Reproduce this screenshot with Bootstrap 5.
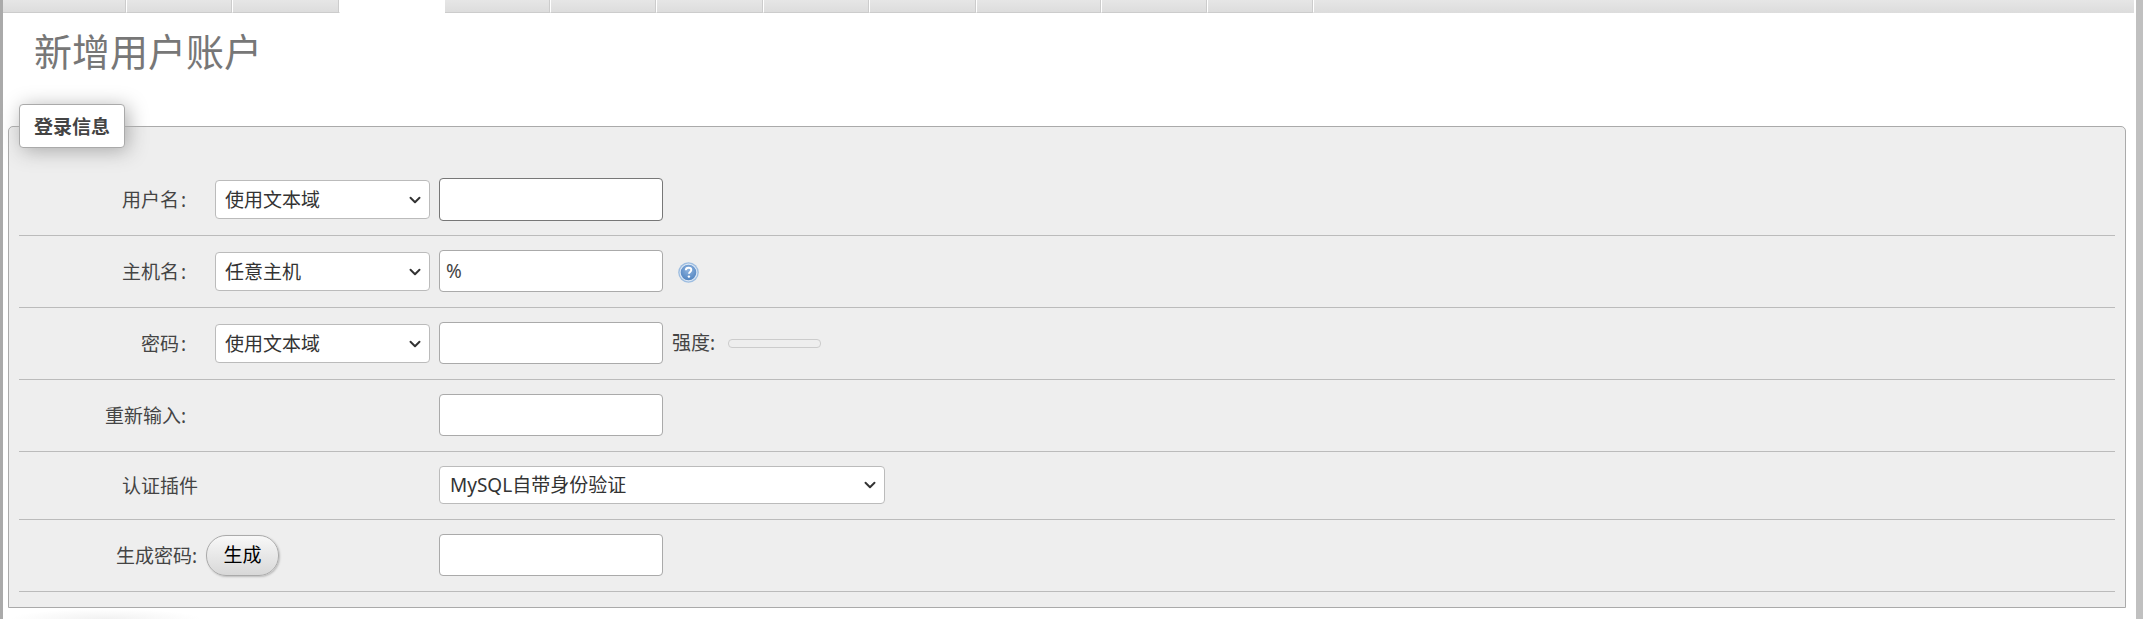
<!DOCTYPE html>
<html lang="zh-CN">
<head>
  <meta charset="UTF-8" />
  <meta name="viewport" content="width=device-width, initial-scale=1" />
  <title>新增用户账户</title>
  <link rel="stylesheet" href="https://cdn.jsdelivr.net/npm/bootstrap@5.3.0/dist/css/bootstrap.min.css" />
  <style>
    html, body { height: 100%; overflow: hidden; }
    body {
      background: #fff;
      color: #444;
      font-family: "Noto Sans", "Noto Sans CJK SC", sans-serif;
      font-size: 19px;
    }
    .page-wrap { height: 619px; overflow: hidden; }
    .pane-left { width: 3px; background: #aaa; }
    .pane-right { width: 7px; margin-left: 2px; background: #c0c0c0; }
    .pane-main { width: 2131px; }

    .tab-bar { height: 13px; background: linear-gradient(#e6e6e6, #dcdcdc); }
    .tab-item { height: 13px; border-right: 1px solid #fff; border-bottom: 1px solid #ccc; box-shadow: inset -1px 0 0 #ccc; }
    .tab-item.is-active { background: #fff; border-bottom: 0; box-shadow: none; border-right: 0; }
    .tab-rest { height: 13px; }

    .page-title {
      height: 91px;
      margin: 0;
      padding: 13px 0 0 31px;
      font-size: 38px;
      line-height: 50px;
      font-weight: 400;
      color: #777;
    }
    .set-legend {
      position: relative;
      z-index: 2;
      width: 106px;
      height: 44px;
      margin: 0 0 -22px 16px;
      background: #fff;
      border: 1px solid #aaa;
      border-radius: 4px;
      box-shadow: 3px 3px 20px #aaa;
      font-weight: 700;
      line-height: 44px;
      text-align: center;
    }
    .set-box {
      width: 2118px;
      margin-left: 5px;
      padding: 37px 10px 15px;
      background: #eee;
      border: 1px solid #aaa;
      border-radius: 5px 5px 0 0;
    }
    .form-line { height: 72px; border-bottom: 1px solid #bbb; }
    .form-line.line-short { height: 68px; }
    .line-label { width: 196px; padding-top: 2px; padding-right: 29px; text-align: right; }
    .line-label.label-wide { padding-right: 17px; }
    .line-label.label-btn { width: 178px; padding-right: 0; }
    .line-field { width: 215px; margin-right: 9px; }

    .form-select.pma-select {
      height: 39px;
      padding: 2px 24px 0 9px;
      font-size: 19px;
      color: #333;
      border: 1px solid #bbb;
      border-radius: 4px;
      background-image: url("data:image/svg+xml,%3csvg xmlns='http://www.w3.org/2000/svg' viewBox='0 0 16 16'%3e%3cpath fill='none' stroke='%23333' stroke-linecap='round' stroke-linejoin='round' stroke-width='2.6' d='m2 5 6 6 6-6'/%3e%3c/svg%3e");
      background-position: right 7px center;
      background-size: 14px 12px;
    }
    .form-select.pma-select.select-long { width: 446px; height: 38px; margin-bottom: 2px; padding-left: 10px; }
    .form-control.pma-input {
      width: 224px;
      height: 42px;
      margin-bottom: 1px;
      padding: 0 6px;
      font-size: 19px;
      color: #444;
      border: 1px solid #aaa;
      border-radius: 4px;
    }
    .form-control.pma-input.is-focus { height: 43px; margin-bottom: 0; border-color: #777; }
    .help-mark { margin-left: 15px; margin-top: 2px; }
    .strength-text { margin-left: 9px; }
    .strength-bar {
      width: 93px;
      height: 9px;
      margin-left: 13px;
      background: #eee;
      border: 1px solid #ccc;
      border-radius: 4px;
    }
    .btn.pma-btn {
      width: 73px;
      height: 41px;
      margin-left: 9px;
      margin-right: 160px;
      padding: 0;
      font-size: 19px;
      color: #000;
      border: 1px solid #aaa;
      border-radius: 20px;
      background: linear-gradient(#f8f8f8, #d8d8d8);
      box-shadow: 1px 1px 2px #bbb;
    }
    .next-legend {
      width: 190px;
      height: 9px;
      margin: 2px 0 0 8px;
      background: radial-gradient(ellipse 95px 10px at 50% 100%, #f1f1f1, #fff);
    }
  </style>
</head>
<body>

<div class="page-wrap d-flex">
  <div class="pane-left flex-shrink-0"></div>

  <div class="pane-main flex-shrink-0">
    <div class="tab-bar d-flex">
      <div class="tab-item" style="width: 124px"></div>
      <div class="tab-item" style="width: 106px"></div>
      <div class="tab-item" style="width: 107px"></div>
      <div class="tab-item is-active" style="width: 105px"></div>
      <div class="tab-item" style="width: 106px"></div>
      <div class="tab-item" style="width: 106px"></div>
      <div class="tab-item" style="width: 107px"></div>
      <div class="tab-item" style="width: 106px"></div>
      <div class="tab-item" style="width: 107px"></div>
      <div class="tab-item" style="width: 125px"></div>
      <div class="tab-item" style="width: 106px"></div>
      <div class="tab-item" style="width: 106px"></div>
      <div class="tab-rest flex-grow-1"></div>
    </div>

    <h2 class="page-title">新增用户账户</h2>

    <div class="set-legend">登录信息</div>
    <div class="set-box">
      <div class="form-line d-flex align-items-center">
        <div class="line-label">用户名&#8202;:</div>
        <div class="line-field">
          <select class="form-select pma-select"><option>使用文本域</option></select>
        </div>
        <input type="text" class="form-control pma-input is-focus">
      </div>

      <div class="form-line d-flex align-items-center">
        <div class="line-label">主机名&#8202;:</div>
        <div class="line-field">
          <select class="form-select pma-select"><option>任意主机</option></select>
        </div>
        <input type="text" class="form-control pma-input" value="%">
        <svg class="help-mark" width="21" height="21" viewBox="0 0 21 21">
          <defs>
            <radialGradient id="helpFill" cx="50%" cy="35%" r="65%">
              <stop offset="0" stop-color="#8fb4e0" />
              <stop offset="1" stop-color="#4f82bf" />
            </radialGradient>
          </defs>
          <circle cx="10.5" cy="10.5" r="10.3" fill="#9dbde0" />
          <circle cx="10.5" cy="10.5" r="8.4" fill="url(#helpFill)" stroke="#dce7f4" stroke-width="1.2" />
          <path d="M7.8 8.2c0-1.6 1.2-2.5 2.8-2.5s2.7.9 2.7 2.3c0 1.9-2.3 2-2.3 3.8" fill="none" stroke="#fff" stroke-width="1.9" />
          <circle cx="10.9" cy="14.6" r="1.2" fill="#fff" />
        </svg>
      </div>

      <div class="form-line d-flex align-items-center">
        <div class="line-label">密码&#8202;:</div>
        <div class="line-field">
          <select class="form-select pma-select"><option>使用文本域</option></select>
        </div>
        <input type="password" class="form-control pma-input">
        <span class="strength-text">强度:</span>
        <div class="strength-bar"></div>
      </div>

      <div class="form-line d-flex align-items-center">
        <div class="line-label">重新输入:</div>
        <div class="line-field"></div>
        <input type="password" class="form-control pma-input">
      </div>

      <div class="form-line line-short d-flex align-items-center">
        <div class="line-label label-wide">认证插件</div>
        <div class="line-field"></div>
        <select class="form-select pma-select select-long"><option>MySQL自带身份验证</option></select>
      </div>

      <div class="form-line d-flex align-items-center">
        <div class="line-label label-btn">生成密码:</div>
        <button type="button" class="btn pma-btn flex-shrink-0">生成</button>
        <input type="text" class="form-control pma-input">
      </div>
    </div>
    <div class="next-legend"></div>
  </div>

  <div class="pane-right flex-shrink-0"></div>
</div>

<script src="https://cdn.jsdelivr.net/npm/bootstrap@5.3.0/dist/js/bootstrap.bundle.min.js"></script>
</body>
</html>
